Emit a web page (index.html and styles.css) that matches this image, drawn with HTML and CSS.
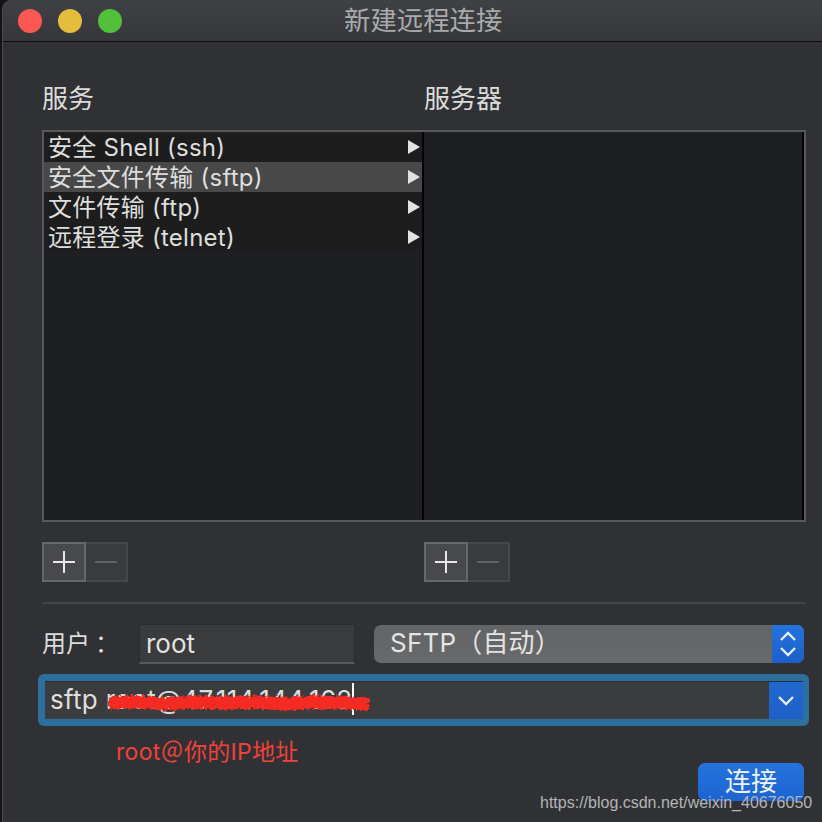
FILE: index.html
```html
<!DOCTYPE html>
<html lang="zh-CN">
<head>
  <meta charset="UTF-8" />
  <meta name="viewport" content="width=device-width, initial-scale=1.0"/>
  <title>新建远程连接</title>
  <link rel="stylesheet" href="styles.css">
</head>
<body>
  <div class="window">
    <div class="titlebar">
      <div class="lights">
        <span class="light red"></span>
        <span class="light yellow"></span>
        <span class="light green"></span>
      </div>
      <div class="title">新建远程连接</div>
    </div>

    <div class="content">
      <div class="headers">
        <div>服务</div>
        <div>服务器</div>
      </div>

      <!-- 服务列表 -->
      <div class="panes">
        <ul class="services">
          <li><span>安全 Shell (ssh)</span><i class="arrow"></i></li>
          <li class="selected"><span>安全文件传输 (sftp)</span><i class="arrow"></i></li>
          <li><span>文件传输 (ftp)</span><i class="arrow"></i></li>
          <li><span>远程登录 (telnet)</span><i class="arrow"></i></li>
        </ul>
        <div class="servers"></div>
      </div>

      <div class="tools">
        <div class="tool-group">
          <div class="tool plus"><svg width="24" height="24" viewBox="0 0 24 24"><path d="M1 12H23M12 1V23" stroke="#e8e8e8" stroke-width="2" fill="none"/></svg></div>
          <div class="tool minus"><svg width="24" height="24" viewBox="0 0 24 24"><path d="M1 12H23" stroke="#5f6063" stroke-width="2" fill="none"/></svg></div>
        </div>
        <div class="tool-group">
          <div class="tool plus"><svg width="24" height="24" viewBox="0 0 24 24"><path d="M1 12H23M12 1V23" stroke="#e8e8e8" stroke-width="2" fill="none"/></svg></div>
          <div class="tool minus"><svg width="24" height="24" viewBox="0 0 24 24"><path d="M1 12H23" stroke="#5f6063" stroke-width="2" fill="none"/></svg></div>
        </div>
      </div>

      <div class="separator"></div>

      <div class="user-row">
        <label class="user-label">用户<span class="colon">：</span></label>
        <div class="user-input">root</div>
        <div class="protocol">
          <span class="protocol-text">SFTP（自动）</span>
          <span class="stepper">
            <svg width="18" height="26" viewBox="0 0 18 26"><path d="M2 9L9 2L16 9M2 17L9 24L16 17" stroke="#e6eefb" stroke-width="2.4" fill="none"/></svg>
          </span>
        </div>
      </div>

      <div class="command-ring">
        <div class="command">
          <div class="command-text">sftp root@47.114.144.162<span class="caret"></span>
            <svg class="scribble" width="270" height="28" viewBox="0 0 270 28">
              <defs>
                <filter id="rough" filterUnits="userSpaceOnUse" x="0" y="0" width="270" height="28">
                  <feTurbulence type="fractalNoise" baseFrequency="0.35" numOctaves="2" seed="4" result="noise"/>
                  <feDisplacementMap in="SourceGraphic" in2="noise" scale="7"/>
                </filter>
              </defs>
              <path filter="url(#rough)" d="M4 15L30 14L60 16L90 14L120 15L150 14L180 16L210 14L240 15L264 16" stroke="#f52a22" stroke-width="13" fill="none"/>
            </svg>
          </div>
          <span class="dropdown">
            <svg width="18" height="12" viewBox="0 0 18 12"><path d="M2 2L9 9L16 2" stroke="#e6eefb" stroke-width="2.4" fill="none"/></svg>
          </span>
        </div>
      </div>

      <div class="note">root＠你的IP地址</div>

      <div class="actions">
        <button class="connect">连接</button>
      </div>
    </div>

    <div class="watermark">https://blog.csdn.net/weixin_40676050</div>
  </div>
</body>
</html>
```

FILE: styles.css
```css
* {
  box-sizing: border-box;
  margin: 0;
  padding: 0;
  font-family: "Inter", "Noto Sans CJK SC", sans-serif;
}
body {
  background: #141416;
  width: 822px;
  height: 822px;
  overflow: hidden;
}
.window {
  position: relative;
  margin-left: 2px;
  height: 822px;
  background: #303135;
  border-left: 1px solid #4a4b4e;
  border-top-left-radius: 9px;
  overflow: hidden;
}
.titlebar {
  display: flex;
  align-items: center;
  height: 42px;
  padding-left: 15px;
  background: linear-gradient(#404145, #36373b);
  border-bottom: 1px solid #0e0e0f;
}
.lights {
  display: flex;
  gap: 16px;
}
.light {
  width: 24px;
  height: 24px;
  border-radius: 50%;
}
.red { background: #fc5753; }
.yellow { background: #e5bd3c; }
.green { background: #52c03a; }
.title {
  margin-left: 222px;
  padding-bottom: 2px;
  font-size: 26.4px;
  line-height: 40px;
  color: #a9aaab;
}
.content {
  padding: 0 16px 0 39px;
}
.headers {
  display: flex;
  height: 88px;
  padding-top: 39px;
  font-size: 26px;
  line-height: 36px;
  color: #dcdcdc;
}
.headers div {
  width: 382px;
}
.panes {
  display: flex;
  width: 764px;
  height: 392px;
  border: 2px solid #56585a;
  background: #1e1f22;
}
.services {
  width: 378px;
  list-style: none;
}
.services li {
  display: flex;
  align-items: center;
  justify-content: space-between;
  height: 30px;
  padding: 0 2px 0 4px;
  background: #1d1d1d;
  font-size: 24px;
  letter-spacing: 0.25px;
  color: #dedede;
}
.services li span {
  padding-bottom: 4px;
}
.services li.selected {
  background: #484848;
}
.arrow {
  width: 0;
  height: 0;
  border-left: 12px solid #e2e2e2;
  border-top: 7px solid transparent;
  border-bottom: 7px solid transparent;
}
.servers {
  flex: 1;
  border-left: 2px solid #000;
  border-right: 2px solid #000;
}
.tools {
  display: flex;
  gap: 296px;
  margin-top: 20px;
}
.tool-group {
  display: flex;
  width: 86px;
  height: 40px;
}
.tool {
  display: flex;
  align-items: center;
  justify-content: center;
  height: 40px;
}
.plus {
  width: 44px;
  background: #48494c;
  border: 2px solid #66676a;
}
.minus {
  width: 42px;
  background: #3a3b3e;
  border: 2px solid #46474a;
  border-left: none;
}
.separator {
  height: 2px;
  width: 764px;
  margin-top: 20px;
  background: #434447;
}
.user-row {
  display: flex;
  align-items: center;
  margin-top: 20px;
  height: 40px;
}
.user-label {
  width: 97px;
  padding-bottom: 6px;
  font-size: 24px;
  color: #dcdcdc;
}
.colon {
  padding-left: 5px;
  font-family: "Noto Sans CJK TC", sans-serif;
}
.user-input {
  width: 216px;
  height: 40px;
  padding-left: 6px;
  background: #3a3b3d;
  border: 1px solid #2b2c2f;
  border-bottom: 2px solid #57585a;
  font-size: 26px;
  line-height: 37px;
  color: #e2e2e2;
}
.protocol {
  display: flex;
  justify-content: space-between;
  width: 430px;
  height: 38px;
  margin-left: 19px;
  background: linear-gradient(#636466, #68696b);
  border-radius: 7px;
  overflow: hidden;
}
.protocol-text {
  padding-left: 16px;
  font-size: 26px;
  letter-spacing: 0.2px;
  line-height: 36px;
  color: #e4e4e4;
}
.stepper {
  display: flex;
  align-items: center;
  justify-content: center;
  width: 32px;
  background: linear-gradient(#2573de, #1c5fc8);
}
.command-ring {
  width: 771px;
  height: 52px;
  margin: 10px 0 0 -4px;
  padding: 7px 6px 7px 7px;
  background: #2f6f9f;
  border-radius: 6px;
}
.command {
  display: flex;
  justify-content: space-between;
  height: 38px;
  background: #3b3c3e;
  border-top: 1px solid #2b2c2f;
}
.command-text {
  position: relative;
  padding-left: 5px;
  font-size: 26px;
  letter-spacing: 0.3px;
  line-height: 36px;
  color: #dedede;
  white-space: nowrap;
}
.caret {
  position: absolute;
  left: 307px;
  top: 1px;
  width: 2px;
  height: 32px;
  background: #fff;
}
.scribble {
  position: absolute;
  left: 60px;
  top: 6px;
}
.dropdown {
  display: flex;
  align-items: center;
  justify-content: center;
  width: 34px;
  background: linear-gradient(#2268cf, #1c5fc8);
}
.note {
  margin: 15px 0 0 74px;
  font-size: 23px;
  letter-spacing: 0.3px;
  line-height: 22px;
  color: #f0413a;
}
.actions {
  display: flex;
  justify-content: flex-end;
  width: 762px;
}
.connect {
  width: 106px;
  height: 38px;
  border: none;
  border-radius: 7px;
  background: linear-gradient(#2573de, #1c64d0);
  color: #eef3fb;
  font-size: 26px;
  line-height: 36px;
}
.watermark {
  position: absolute;
  left: 537px;
  top: 792px;
  font-family: "Liberation Sans", sans-serif;
  font-size: 16px;
  line-height: 22px;
  color: #b4b5b6;
  white-space: nowrap;
}
```
